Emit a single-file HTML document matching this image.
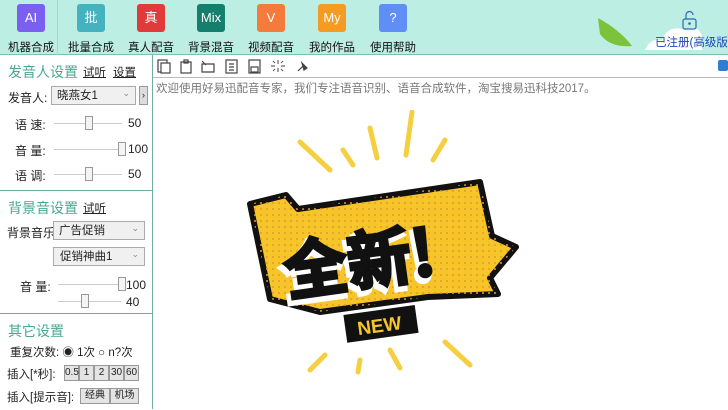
<!DOCTYPE html>
<html><head><meta charset="utf-8"><style>
*{margin:0;padding:0;box-sizing:border-box}
body{width:728px;height:409px;overflow:hidden;background:#fff;font-family:"Liberation Sans","Noto Sans CJK SC",sans-serif;font-size:12px;color:#222;position:relative}
.top{position:absolute;left:0;top:0;width:728px;height:55px;background:#bdeee4;border-bottom:1px solid #7fbfb0}
.ic{position:absolute;top:4px;width:28px;height:28px;border-radius:3px;color:#fff;font-size:13px;text-align:center;line-height:28px}
.lb{position:absolute;top:39px;font-size:11.5px;color:#111;width:60px;text-align:center}
.a{position:absolute;white-space:nowrap}
.h{color:#4aa890;font-size:14px}
.u{text-decoration:underline;font-size:11.5px}
.sel{position:absolute;border:1px solid #aaa;background:#f0f0f0;height:19px;font-size:11.5px;padding-left:5px;line-height:19px}
.sel:after{content:"⌄";position:absolute;right:5px;top:-3px;color:#888;font-size:9px}
.trk{position:absolute;height:1px;background:#ccc}
.th{position:absolute;width:8px;height:14px;border:1px solid #999;background:#f4f4f4}
.sep{position:absolute;left:0;width:152px;height:1px;background:#6fae9f}
.btn{position:absolute;border:1px solid #999;background:#e4e4e4;font-size:10px;height:16px;line-height:14px;text-align:center}
</style></head><body>
<div class="top"></div>
<div class="ic" style="left:17px;background:#7b5ff0">AI</div>
<div class="ic" style="left:77px;background:#45b3bf">批</div>
<div class="ic" style="left:137px;background:#e03a3a">真</div>
<div class="ic" style="left:197px;background:#137f6c">Mix</div>
<div class="ic" style="left:257px;background:#f47b3c">V</div>
<div class="ic" style="left:318px;background:#f59b22">My</div>
<div class="ic" style="left:379px;background:#5f8ef5">?</div>
<div class="lb" style="left:1px">机器合成</div>
<div class="lb" style="left:61px">批量合成</div>
<div class="lb" style="left:121px">真人配音</div>
<div class="lb" style="left:181px">背景混音</div>
<div class="lb" style="left:241px">视频配音</div>
<div class="lb" style="left:302px">我的作品</div>
<div class="lb" style="left:363px">使用帮助</div>
<div style="position:absolute;left:57px;top:0;width:1px;height:55px;background:#a8d8cc"></div>
<svg class="a" style="left:590px;top:10px" width="138" height="45"><path d="M8 8 Q30 20 42 36 Q20 38 10 24 Z" fill="#7cc23a"/><path d="M55 40 Q60 28 72 30 Q78 14 96 20 Q108 14 112 26 L112 40 Z" fill="#fff"/>
<rect x="93" y="9" width="13" height="10" rx="2" fill="none" stroke="#2a6ab8" stroke-width="1.2"/><path d="M96 9 V5 a3.5 3.5 0 0 1 7 0" fill="none" stroke="#2a6ab8" stroke-width="1.2"/><circle cx="99.5" cy="13.5" r="1.3" fill="#2a6ab8"/></svg>
<div class="a" style="left:655px;top:34px;color:#1c44b8;font-size:11.5px">已注册(高级版)</div>
<div style="position:absolute;left:152px;top:55px;width:1px;height:354px;background:#6fae9f"></div>
<div class="a h" style="left:8px;top:62px">发音人设置</div><div class="a u" style="left:83px;top:64px">试听</div><div class="a u" style="left:113px;top:64px">设置</div>
<div class="a" style="left:8px;top:89px;font-size:12px">发音人:</div>
<div class="sel" style="left:51px;top:86px;width:85px">晓燕女1</div>
<div style="position:absolute;left:139px;top:86px;width:9px;height:19px;border:1px solid #999;background:#ddd;font-size:9px;line-height:17px;text-align:center">›</div>
<div class="a" style="left:15px;top:116px">语 速:</div><div class="trk" style="left:54px;top:123px;width:68px"></div><div class="th" style="left:85px;top:116px"></div><div class="a" style="left:128px;top:116px">50</div>
<div class="a" style="left:15px;top:142px">音 量:</div><div class="trk" style="left:54px;top:149px;width:68px"></div><div class="th" style="left:118px;top:142px"></div><div class="a" style="left:128px;top:142px">100</div>
<div class="a" style="left:15px;top:167px">语 调:</div><div class="trk" style="left:54px;top:174px;width:68px"></div><div class="th" style="left:85px;top:167px"></div><div class="a" style="left:128px;top:167px">50</div>
<div class="sep" style="top:190px"></div>
<div class="a h" style="left:8px;top:198px">背景音设置</div><div class="a u" style="left:83px;top:200px">试听</div>
<div class="a" style="left:7px;top:224px">背景音乐</div>
<div class="sel" style="left:53px;top:221px;width:92px">广告促销</div>
<div class="sel" style="left:53px;top:247px;width:92px;padding-left:6px">促销神曲1</div>
<div class="a" style="left:20px;top:278px">音 量:</div><div class="trk" style="left:58px;top:284px;width:63px"></div><div class="th" style="left:118px;top:277px"></div><div class="a" style="left:126px;top:278px">100</div>
<div class="trk" style="left:58px;top:301px;width:63px"></div><div class="th" style="left:81px;top:294px"></div><div class="a" style="left:126px;top:295px">40</div>
<div class="sep" style="top:313px"></div>
<div class="a h" style="left:8px;top:321px">其它设置</div>
<div class="a" style="left:10px;top:344px;font-size:11.5px">重复次数: ◉ 1次 ○ n?次</div>
<div class="a" style="left:7px;top:366px;font-size:11.5px">插入[*秒]:</div>
<div class="btn" style="left:64px;top:365px;width:15px">0.5</div><div class="btn" style="left:79px;top:365px;width:15px">1</div><div class="btn" style="left:94px;top:365px;width:15px">2</div><div class="btn" style="left:109px;top:365px;width:15px">30</div><div class="btn" style="left:124px;top:365px;width:15px">60</div>
<div class="a" style="left:7px;top:389px;font-size:11.5px">插入[提示音]:</div>
<div class="btn" style="left:80px;top:388px;width:30px">经典</div><div class="btn" style="left:110px;top:388px;width:29px">机场</div>
<div style="position:absolute;left:153px;top:77px;width:575px;height:1px;background:#bbb"></div>
<svg class="a" style="left:156px;top:58px" width="180" height="16" fill="none" stroke="#444" stroke-width="1.2">
<rect x="2" y="2" width="9" height="12"/><rect x="5" y="5" width="9" height="10" fill="#fff"/>
<rect x="25" y="4" width="10" height="11"/><rect x="28" y="2" width="4" height="3"/>
<path d="M46 6 H58 V14 H46 Z M46 3 L50 7"/>
<rect x="70" y="2" width="11" height="13"/><path d="M73 6H78M73 9H78M73 12H78"/>
<rect x="93" y="2" width="11" height="13"/><rect x="95" y="9" width="7" height="5"/>
<path d="M122 2V6M122 10V14M115 8H119M125 8H129M117 3L119 5M125 11L127 13M127 3L125 5M117 13L119 11" stroke="#666"/>
<path d="M142 13 L148 7 M146 5 L151 10 L148 12 Z" fill="#444"/>
</svg>
<div style="position:absolute;left:718px;top:60px;width:10px;height:11px;background:#2a7fd0;border-radius:2px"></div>
<div class="a" style="left:156px;top:80px;color:#777;font-size:11.5px">欢迎使用好易迅配音专家，我们专注语音识别、语音合成软件，淘宝搜易迅科技2017。</div>
<svg class="a" style="left:240px;top:110px" width="300" height="300">
<defs><pattern id="d" width="6" height="6" patternUnits="userSpaceOnUse"><circle cx="3" cy="3" r="1" fill="#e89a2a"/></pattern></defs>
<g stroke="#f5cf3f" stroke-width="5" stroke-linecap="round">
<line x1="60" y1="32" x2="90" y2="60"/><line x1="103" y1="40" x2="113" y2="55"/><line x1="130" y1="18" x2="137" y2="48"/><line x1="172" y1="2" x2="166" y2="45"/><line x1="205" y1="30" x2="193" y2="50"/>
<line x1="85" y1="245" x2="70" y2="260"/><line x1="120" y1="250" x2="118" y2="262"/><line x1="150" y1="240" x2="160" y2="258"/><line x1="205" y1="232" x2="230" y2="255"/>
</g>
<path d="M6 92 L48 80 L60 95 L244 66 L258 125 L282 135 L254 172 L264 188 L190 192 L80 208 L28 194 Z" fill="#fff"/>
<path d="M10 94 L46 85 L58 99 L240 72 L252 126 L276 137 L250 168 L258 184 L188 187 L80 202 L30 189 Z" fill="#f6c52a" stroke="#111" stroke-width="6" stroke-linejoin="round"/>
<path d="M10 94 L46 85 L58 99 L240 72 L252 126 L276 137 L250 168 L258 184 L188 187 L80 202 L30 189 Z" fill="url(#d)"/>
<g transform="rotate(-8 140 140)" font-family="Noto Sans CJK SC,sans-serif" font-weight="bold" font-size="64">
<text x="39" y="176" fill="#fff" stroke="#fff" stroke-width="6">全新!</text>
<text x="42" y="172" fill="#111" stroke="#111" stroke-width="3">全新!</text>
</g>
<rect x="105" y="200" width="72" height="28" fill="#111" transform="rotate(-8 140 214)"/>
<text x="117" y="222" font-size="19" font-weight="bold" fill="#f6c52a" transform="rotate(-8 140 214)">NEW</text>
</svg>
</body></html>
